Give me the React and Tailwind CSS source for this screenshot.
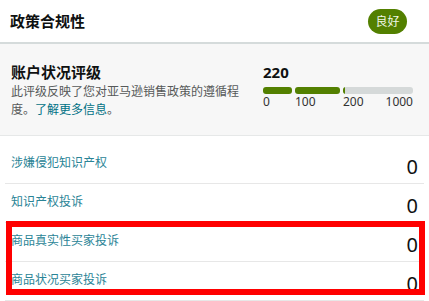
import React from "react";

const rows = ["涉嫌侵犯知识产权", "知识产权投诉", "商品真实性买家投诉", "商品状况买家投诉"];

export default function App() {
  return (
    <div className="relative w-[429px] h-[301px] overflow-hidden bg-white font-['Noto_Sans','Noto_Sans_CJK_SC',sans-serif]">
      <div className="h-[44px] flex items-center justify-between pl-[10px] pr-[22px] border-b-2 border-[#d5dbdb]">
        <span className="text-[15px] leading-[20px] font-bold text-[#0f1111] font-['Noto_Sans_CJK_SC',sans-serif]">政策合规性</span>
        <span className="flex items-center justify-center w-[39px] h-[25px] rounded-full bg-[#538000] text-[12px] leading-none text-[#f0f7e6] font-['Noto_Sans_CJK_SC',sans-serif]">良好</span>
      </div>
      <div className="h-[92px] bg-[#f7f7f7] border-b border-[#e6e8e8] flex pl-[11px] pt-[18px]">
        <div className="w-[232px]">
          <div className="text-[15px] leading-[20px] font-bold text-[#0f1111] font-['Noto_Sans_CJK_SC',sans-serif]">账户状况评级</div>
          <p className="text-[12px] leading-[18px] text-[#565959] font-['Noto_Sans_CJK_SC',sans-serif]">
            此评级反映了您对亚马逊销售政策的遵循程度。<span className="text-[#007185]">了解更多信息</span>。
          </p>
        </div>
        <div className="ml-[20px] w-[150px]">
          <div className="text-[15px] leading-[20px] font-bold text-[#0f1111]">220</div>
          <div className="mt-[5px] flex h-[7px] gap-[3px]">
            <div className="w-[29px] rounded-[3px] bg-[#538000]" />
            <div className="w-[45px] rounded-[3px] bg-[#538000]" />
            <div className="flex-1 rounded-[3px] bg-[#d5d9d9] overflow-hidden flex">
              <div className="w-[2px] bg-[#538000]" />
            </div>
          </div>
          <div className="flex text-[12px] leading-[14px] text-[#333] mt-[1px]">
            <span className="w-[32px]">0</span>
            <span className="w-[48px]">100</span>
            <div className="flex-1 flex justify-between">
              <span>200</span>
              <span>1000</span>
            </div>
          </div>
        </div>
      </div>
      <div className="pt-[9px] px-[5px]">
        {rows.map((r) => (
          <div key={r} className="h-[39px] border-b border-[#e7e7e7] flex justify-between px-[6px]">
            <span className="pt-[8px] text-[12px] leading-[17px] text-[#2a8496] font-['Noto_Sans_CJK_SC',sans-serif]">{r}</span>
            <span className="pt-[10px] text-[20px] leading-[24px] text-[#0f1111]">0</span>
          </div>
        ))}
      </div>
      <div className="absolute left-[6px] top-[221px] w-[419px] h-[74px] border-[6px] border-[#ff0000]" />
    </div>
  );
}
